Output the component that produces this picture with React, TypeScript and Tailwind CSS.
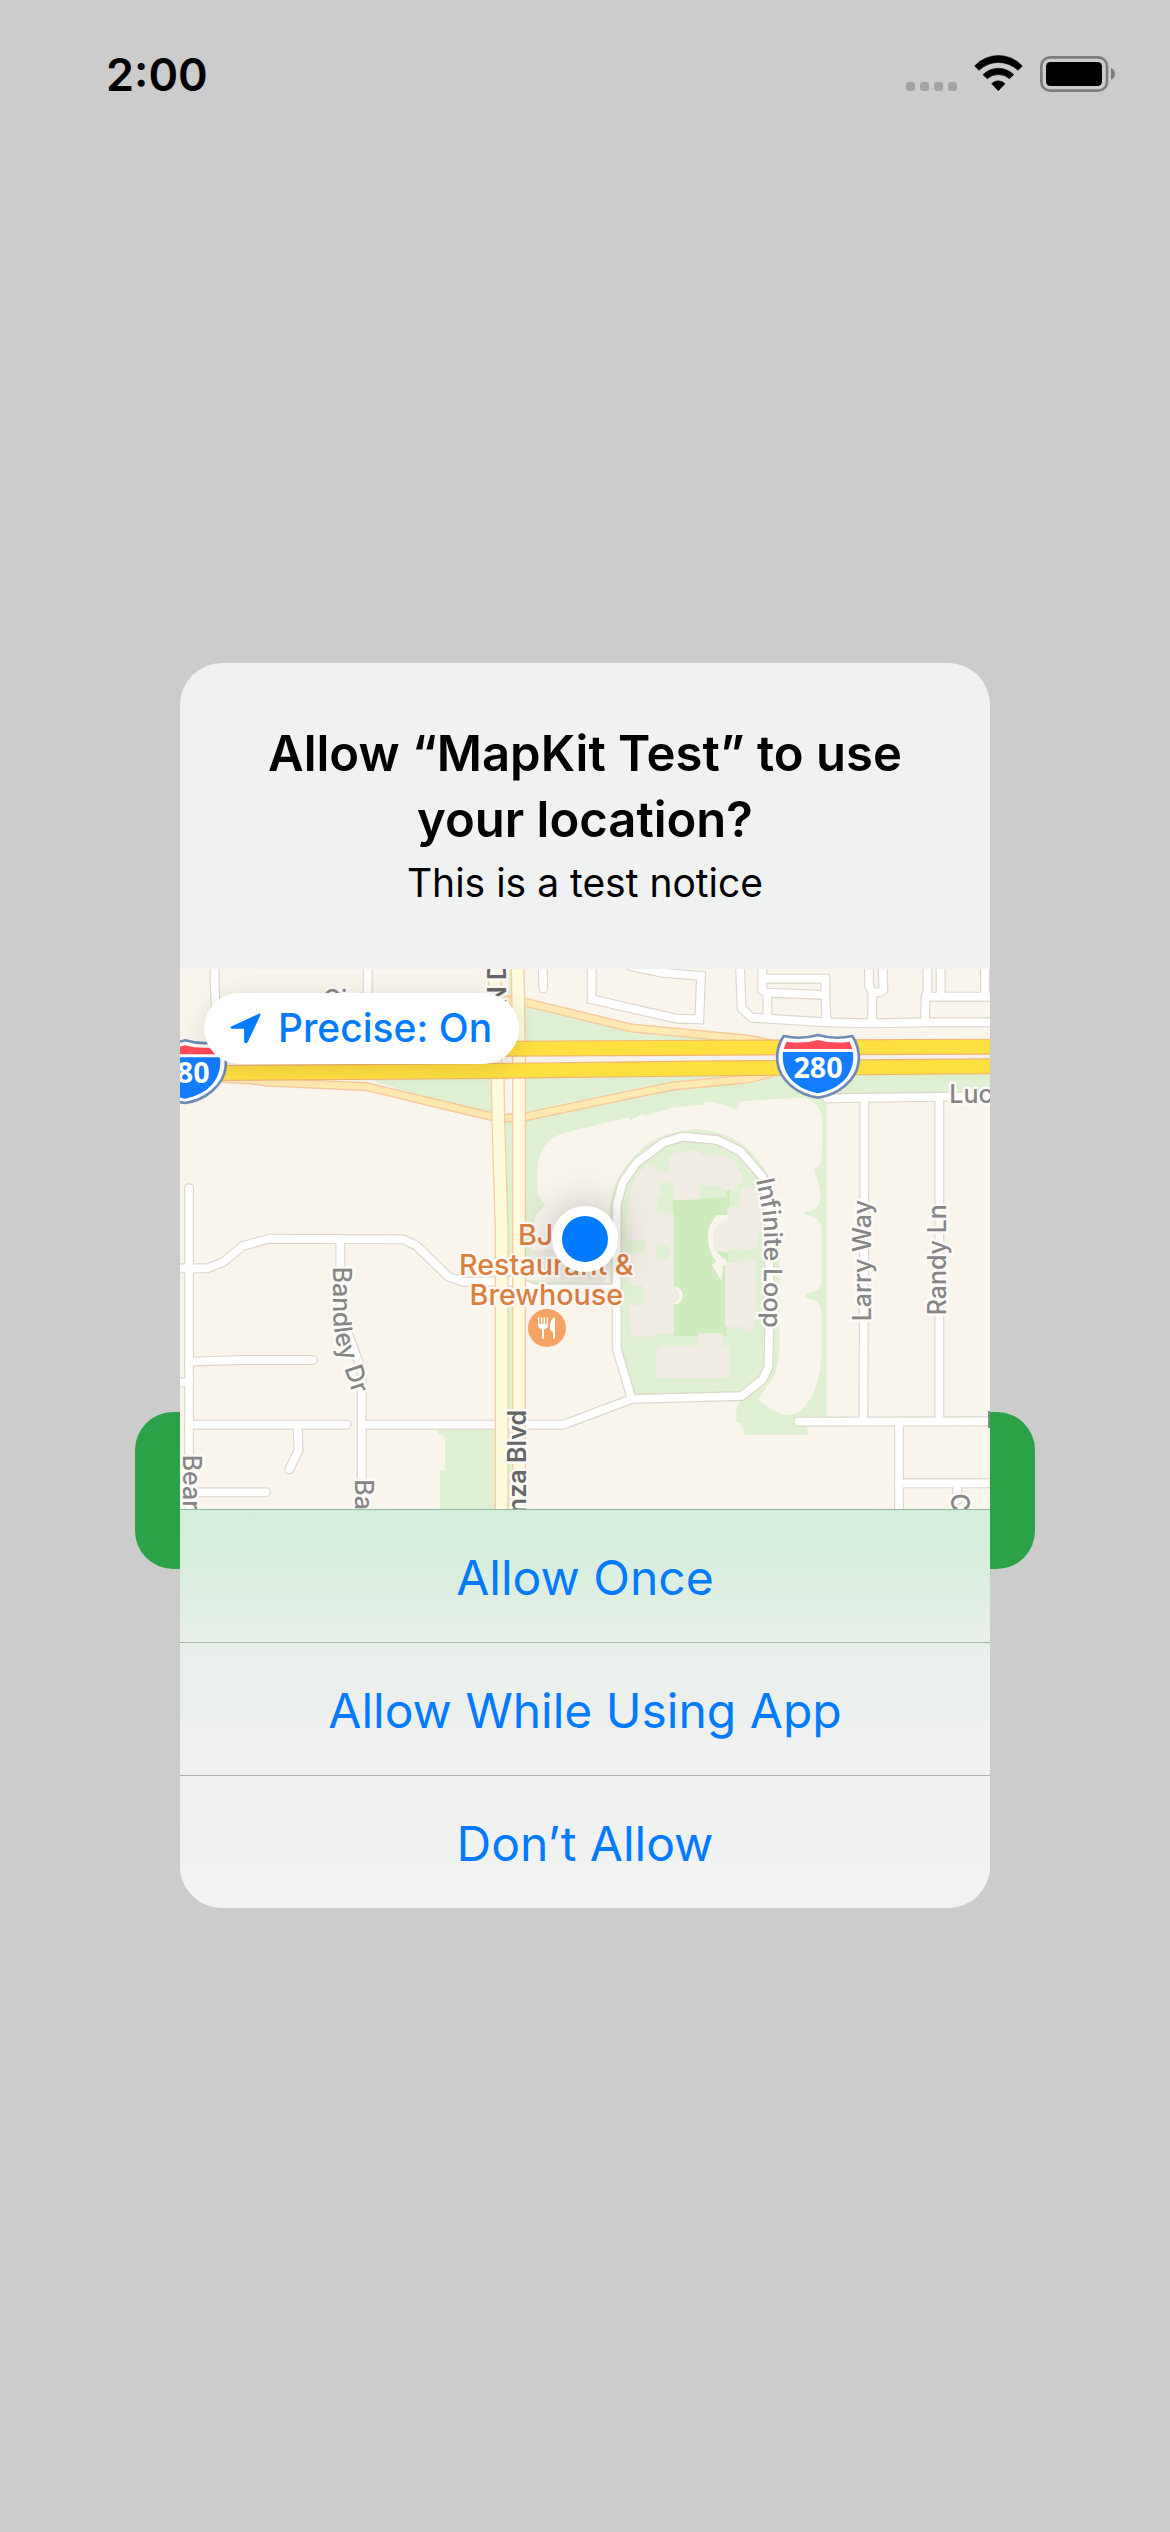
import type { ReactNode } from "react";

const FONT = "Inter, 'Liberation Sans', sans-serif";

/* Local streets, in map units (three per CSS pixel). */
const STREETS = [
  "M104 20V75L108 150",
  "M563 20V150",
  "M27 685V1640",
  "M-10 925H82L130 906L188 858L268 836L668 838L708 856L805 950L850 965H1000",
  "M1000 960L1060 985H1310",
  "M481 836V1060L545 1230V1640",
  "M27 1205L185 1200H398",
  "M-10 1267H27",
  "M27 1394H500",
  "M545 1394H1150L1355 1317L1685 1308L1748 1258L1765 1222L1768 1100V780L1748 650L1680 573L1612 540L1508 530L1450 548L1370 608L1328 668L1310 735V1165L1355 1317",
  "M352 1394L356 1470L328 1528",
  "M30 1597H258",
  "M1088 20L1090 85",
  "M1235 20V118L1490 176L1558 178L1563 48L1445 38L1350 18",
  "M1680 20L1685 145L1715 173L1940 187L2076 190L2235 187H2440",
  "M1747 20V90L1762 100V175",
  "M1747 56H1936V105L1940 187",
  "M1762 98L1936 105",
  "M2067 20V75L2077 100L2076 190",
  "M2108 20L2110 90L2100 97H2077",
  "M2242 20V95L2237 110L2235 187",
  "M2282 20V108",
  "M2237 110H2440",
  "M2415 20V110",
  "M1942 415L2440 408",
  "M2053 413V700L2050 1384",
  "M2278 413V1384",
  "M1855 1385L2440 1384",
  "M2157 1385V1650",
  "M2157 1570H2440",
  "M2332 1570V1620",
];

const RAMPS = [
  "M60 352L215 360L258 366L560 380L840 447L935 470L975 475L1038 470L1355 403L1480 378L1650 362L1710 356L1770 340",
  "M940 116L975 120L1038 127L1355 204L1650 232L1700 236L1770 250",
];

const BOULEVARD = ["M945 20V300L953 355L955 480L965 810V1650", "M1013 20L1017 300V1650"];

const FREEWAY = ["M-10 272L1000 266L1620 263L2440 260", "M-10 340L810 334L1620 325L2440 319"];

function Lines({ paths, color, width }: { paths: string[]; color: string; width: number }) {
  return (
    <g fill="none" stroke={color} strokeWidth={width} strokeLinecap="round" strokeLinejoin="miter">
      {paths.map((d) => (
        <path key={d} d={d} />
      ))}
    </g>
  );
}

function Shield() {
  return (
    <g>
      <path
        d="M1811 228Q1862 240 1914 225Q1966 240 2017 228Q2040 262 2036 305C2030 360 1975 405 1914 413C1853 405 1798 360 1792 305Q1788 262 1811 228Z"
        fill="#fff"
        stroke="#6f8bb4"
        strokeWidth="8"
        strokeLinejoin="round"
      />
      <path d="M1819 245Q1870 252 1914 240Q1958 252 2009 245L2017 267H1811Z" fill="#ff4b58" />
      <path d="M1809 276H2019C2026 340 1985 386 1914 400C1843 386 1802 340 1809 276Z" fill="#127dff" />
      <text x="1914" y="353" textAnchor="middle" fontFamily="'Noto Sans', sans-serif" fontWeight="700" fontSize="86" fill="#fff">
        280
      </text>
    </g>
  );
}

function Label({ x, y, turn, children }: { x: number; y: number; turn: number; children: ReactNode }) {
  return (
    <text transform={`translate(${x} ${y}) rotate(${turn})`}>{children}</text>
  );
}

function LocationMap() {
  return (
    <svg viewBox="0 27 2430 1620" className="block h-full w-full" role="img" aria-label="Map of the current location">
      <defs>
        <path id="loop-label" d="M1728 660L1745 740Q1753 790 1753 860L1749 1200" />
        <path id="bandley-label" d="M460 920V1060Q460 1120 478 1180L540 1370" />
      </defs>
      <rect y="27" width="2430" height="1620" fill="#f9f5ed" />

      <g fill="#dfefd1">
        <path d="M985 20H1030V140H985Z" />
        <path d="M560 330H935V470L840 445L590 365Z" />
        <path d="M1035 130L1355 204L1640 238V262H935V150Z" />
        <path d="M1035 340H2430V403L1940 412V1370H1882V1424H1692V1406H1682V1388H1670L1668 1352L1685 1310L1355 1317L1310 1165V970H1035Z" />
        <path d="M972 485H1000V1640H980Z" />
        <path d="M770 1410H960V1650H780V1532H795V1430L778 1422Z" />
      </g>
      <path d="M1000 288L2430 283V302L1000 308Z" fill="#f6f1ec" />
      <path
        d="M1150 520L1345 472L1350 482L1390 460L1395 468Q1480 435 1570 435L1573 424Q1625 428 1670 448L1682 424L1800 416L1860 413C1905 415 1925 450 1927 480L1925 600Q1918 622 1902 628L1920 690Q1932 752 1875 755V765Q1922 765 1925 810V960Q1922 998 1878 1000V1014Q1922 1018 1925 1060V1180C1922 1280 1880 1365 1825 1365Q1775 1360 1735 1315L1780 1250Q1800 1210 1798 1150V770Q1790 690 1755 630Q1690 520 1560 508Q1440 510 1370 580Q1290 660 1288 760V1200H1290V970L1040 960L1060 800L1068 765L1095 735L1072 700V630Q1080 540 1150 520Z"
        fill="#f9f5ed"
      />
      <path d="M1038 1000H1296V1165L1340 1305L1150 1380H1038Z" fill="#f9f5ed" />
      <path d="M1050 870H1290V935L1270 968L1110 965L1045 930Z" fill="#efebe2" />
      <path d="M1480 720L1640 712V690H1650V765L1640 1128H1480Z" fill="#cdebbb" />
      <g fill="#f0ebe3">
        <path d="M1370 640L1400 620H1425V635H1467V590L1485 578L1555 570L1560 585H1620L1660 600L1690 650V665L1670 675V690H1640L1600 675H1560V718L1482 720V665L1440 668V710H1432V758L1482 762V1120H1428V1130H1355L1345 1035H1390V975H1345V880H1395V840H1340V780L1350 700Z" />
        <path d="M1430 1170L1445 1158H1555V1120H1630V1158H1648V1250L1640 1255H1445L1430 1250Z" />
        <path d="M1642 740H1680V690L1705 678L1725 690L1738 740L1740 810L1728 865L1640 878L1600 870L1590 800L1612 770L1642 765Z" />
        <path d="M1635 910L1728 895V1060L1722 1112H1690V1100H1635Z" />
      </g>
      <path d="M1642 765H1612Q1583 790 1584 835Q1588 885 1610 905L1595 915L1624 962L1630 915L1640 920V900Q1600 880 1598 835Q1600 790 1642 780Z" fill="#f9f5ed" />
      <path d="M1482 980A27 27 0 0 1 1482 1034Z" fill="#f9f5ed" />
      <path d="M1474 982A22 22 0 0 1 1474 1030Z" fill="#f0ebe3" />
      <path d="M1428 855H1468V898H1428ZM1645 868H1675V908H1645ZM1685 868H1720V893H1685Z" fill="#dfefd1" />

      <Lines paths={STREETS} color="#ddd5ca" width={30} />
      <Lines paths={STREETS} color="#ffffff" width={23} />
      <Lines paths={RAMPS} color="#f8c89a" width={27} />
      <Lines paths={RAMPS} color="#fee9b2" width={19} />
      <Lines paths={BOULEVARD} color="#f8cda0" width={42} />
      <Lines paths={BOULEVARD} color="#fdfbdc" width={34} />
      <Lines paths={FREEWAY} color="#f2b473" width={48} />
      <Lines paths={FREEWAY} color="#ffe041" width={41} />

      <Shield />
      <g transform="translate(-1899 16)">
        <Shield />
      </g>

      <g
        fontFamily={FONT}
        fontSize="75"
        fontWeight="500"
        fill="#858585"
        stroke="#fdfbf7"
        strokeWidth="15"
        strokeLinejoin="round"
        className="[paint-order:stroke]"
      >
        <Label x={428} y={143} turn={0}>Cir</Label>
        <Label x={2308} y={430} turn={0}>Luc</Label>
        <Label x={2072} y={1084} turn={-90}>Larry Way</Label>
        <Label x={2299} y={1066} turn={-90}>Randy Ln</Label>
        <Label x={8} y={1484} turn={90}>Bear</Label>
        <Label x={526} y={1558} turn={90}>Ba</Label>
        <Label x={2313} y={1600} turn={90}>C</Label>
        <text>
          <textPath href="#loop-label">Infinite Loop</textPath>
        </text>
        <text>
          <textPath href="#bandley-label">Bandley Dr</textPath>
        </text>
        <g fill="#666666" fontWeight="600">
          <Label x={977} y={136} turn={-90}>N D</Label>
          <g textAnchor="end">
            <Label x={1037} y={1350} turn={-90}>nza Blvd</Label>
          </g>
        </g>
      </g>
      <path d="M2427 1353V1404" stroke="#858585" strokeWidth="6" />

      <g
        fontFamily={FONT}
        fontSize="86"
        fontWeight="500"
        fill="#de7f3e"
        stroke="#fdfbf7"
        strokeWidth="14"
        strokeLinejoin="round"
        textAnchor="middle"
        className="[paint-order:stroke]"
      >
        <text x="1099" y="855">BJ’s</text>
        <text x="1099" y="945">Restaurant &amp;</text>
        <text x="1099" y="1035">Brewhouse</text>
      </g>
      <circle cx="1101" cy="1104" r="57" fill="#f5a465" />
      <path
        d="M1074 1072V1094Q1074 1105 1086 1108V1136H1092V1108Q1104 1105 1104 1094V1072H1100V1092H1095V1072H1091V1092H1087V1072H1083V1092H1078V1072ZM1125 1071Q1110 1078 1110 1098V1108Q1112 1115 1119 1115V1136H1125Z"
        fill="#fff"
      />
    </svg>
  );
}

function StatusBar() {
  return (
    <header className="flex h-[141px] items-start justify-between pt-[55px] pr-[55px] pl-[106px]">
      <time className="-mt-[10px] text-[45px] leading-[60px] font-semibold text-black">2:00</time>
      <div className="flex h-[37px] items-start gap-[17px]">
        <div className="flex gap-[5px] pt-[27px]">
          {[0, 1, 2, 3].map((n) => (
            <span key={n} className="size-[9px] rounded-[3px] bg-[#a3a3a3]" />
          ))}
        </div>
        <svg viewBox="284 75 147 111" className="h-[37px] w-[49px]" aria-hidden="true">
          <g stroke="#000" strokeWidth="2" strokeLinejoin="round">
            <path d="M286 108A97 97 0 0 1 429 108L416 121A84 84 0 0 0 299 121Z" />
            <path d="M311 134A65 65 0 0 1 403 134L390 146A50 50 0 0 0 324 146Z" />
            <path d="M337 161A28 28 0 0 1 377 161L357 182Z" />
          </g>
        </svg>
        <svg viewBox="480 75 225 111" className="h-[37px] w-[75px]" aria-hidden="true">
          <rect x="484" y="82" width="197" height="100" rx="26" fill="none" stroke="#7d7d7d" strokeWidth="8" />
          <rect x="498" y="96" width="168" height="72" rx="13" />
          <path d="M693 115Q705 119 705 132Q705 145 693 149Z" fill="#7d7d7d" />
        </svg>
      </div>
    </header>
  );
}

export default function App() {
  return (
    <div className="relative min-h-screen bg-[#cccccc] font-[Inter,'Liberation_Sans',sans-serif]">
      <StatusBar />
      <main className="px-[135px] pt-[1271px]">
        <button type="button" aria-label="Request location" className="block h-[157px] w-full rounded-[38px] bg-[#2ba148]" />
      </main>

      <div className="absolute inset-0 flex items-center justify-center px-6 pt-[141px] pb-[102px]">
        <section
          role="alertdialog"
          aria-labelledby="alert-title"
          aria-describedby="alert-message"
          className="w-full max-w-[810px] overflow-hidden rounded-[42px] bg-[#f0f1f1] text-center"
        >
          <div className="px-16 pt-[58px] pb-[56px]">
            <h1 id="alert-title" className="text-[49px] leading-[66px] font-semibold text-black">
              Allow “MapKit Test” to use
              <br />
              your location?
            </h1>
            <p id="alert-message" className="text-[39px] leading-[60px] text-black">
              This is a test notice
            </p>
          </div>

          <div className="relative aspect-[3/2]">
            <LocationMap />
            <span className="absolute top-1/2 left-1/2 size-[66px] -translate-1/2 rounded-full border-10 border-white bg-[#007aff] shadow-[0_0_40px_rgba(0,0,0,0.25)]" />
            <button
              type="button"
              className="absolute top-6 left-6 flex h-[71px] items-center gap-[17px] rounded-full bg-white pr-[27px] pl-[26px] text-[39px] font-medium text-[#007aff] shadow-[0_4px_24px_rgba(0,0,0,0.12)]"
            >
              <svg viewBox="149 162 92 92" className="size-[31px]" aria-hidden="true">
                <path
                  d="M153 202L235 164Q241 162 239 169L202 248Q195 255 191 248V212Q191 209 188 209H155Q147 206 153 202Z"
                  fill="currentColor"
                />
              </svg>
              Precise: On
            </button>
          </div>

          <div className="bg-[linear-gradient(#d2eeda,#d7eedd_12%,#e7efe9_33%,#eff1f0_60%,#f1f2f2)] text-[48px] text-[#007aff]">
            <button type="button" className="block h-[133px] w-full border-t border-[#8fb79b] pt-1">
              Allow Once
            </button>
            <button type="button" className="block h-[133px] w-full border-t border-[#a2b5a9] pt-1">
              Allow While Using App
            </button>
            <button type="button" className="block h-[133px] w-full border-t border-[#abb0ad] pt-1">
              Don’t Allow
            </button>
          </div>
        </section>
      </div>
    </div>
  );
}
